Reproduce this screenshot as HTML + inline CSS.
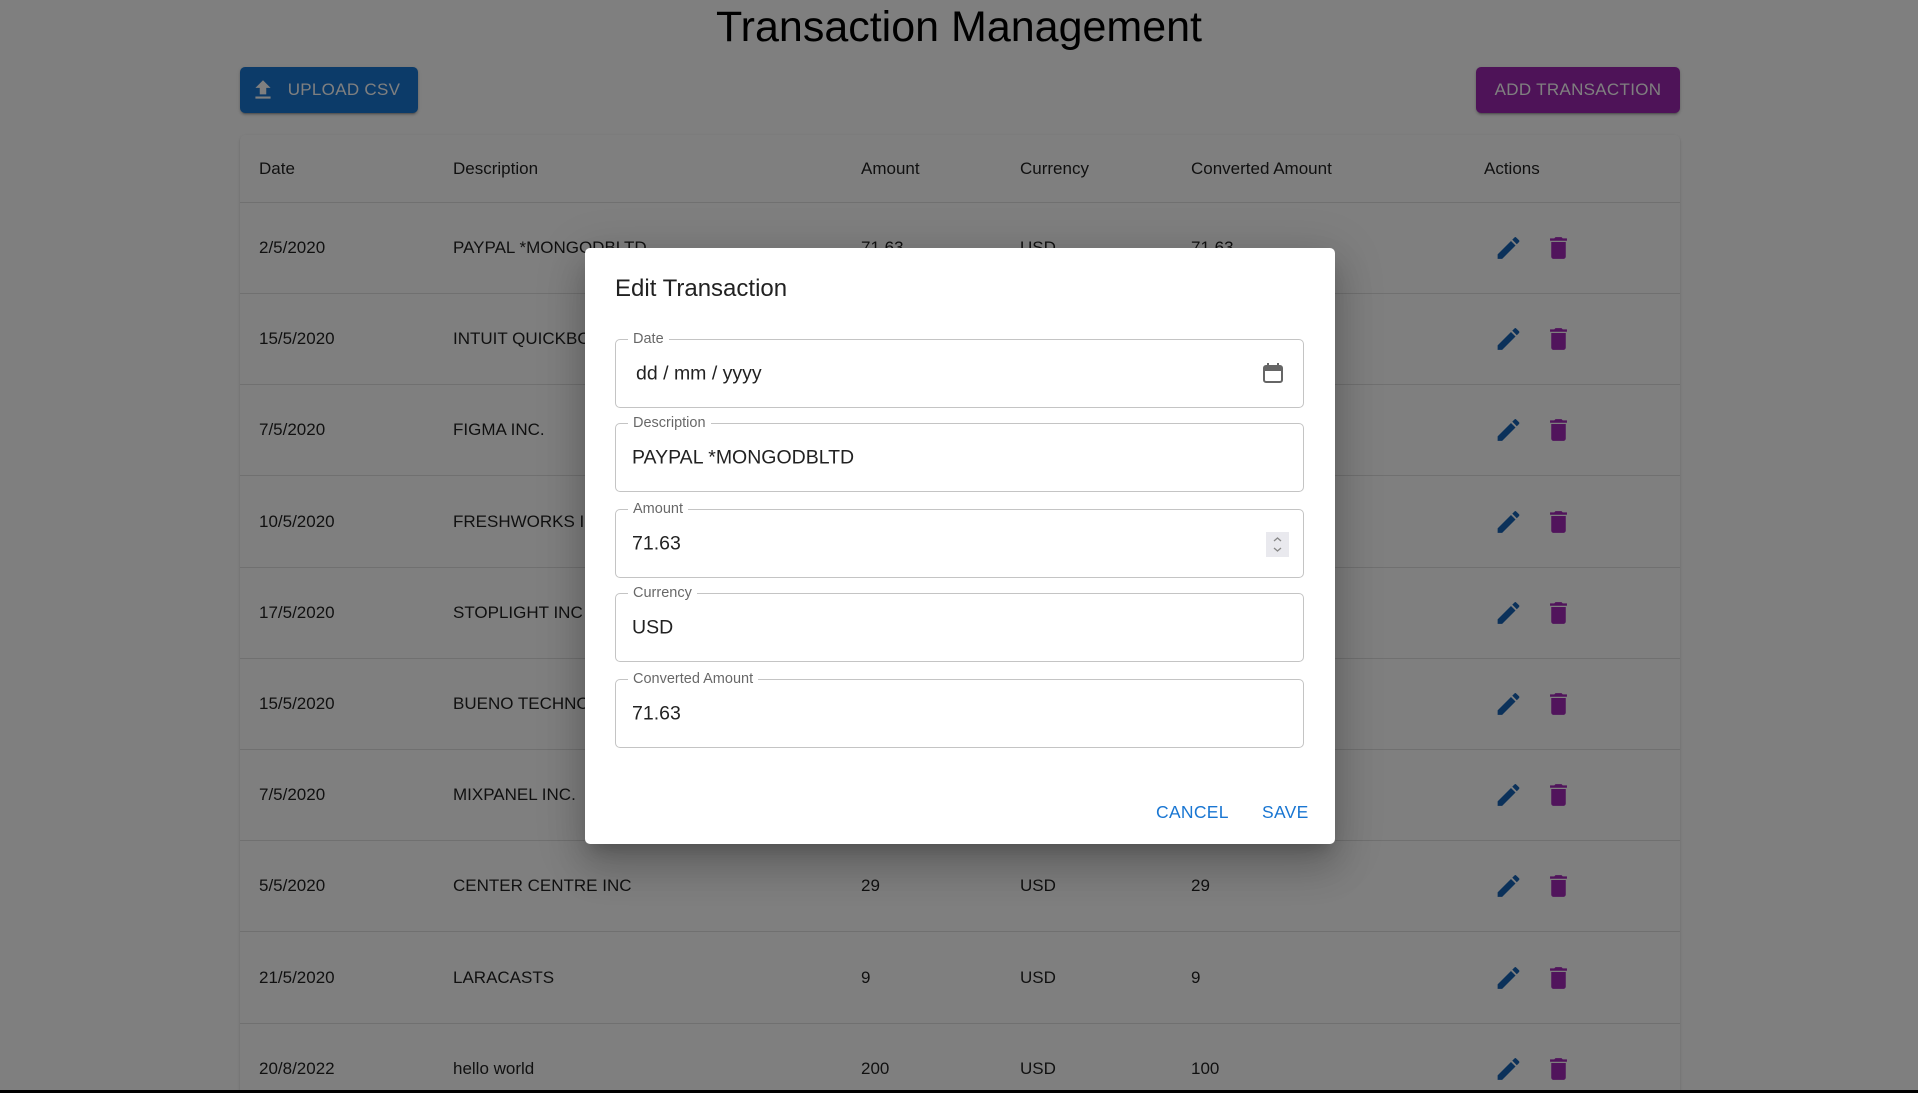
<!DOCTYPE html>
<html><head><meta charset="utf-8"><style>
*{margin:0;padding:0;box-sizing:border-box}
html,body{width:1918px;height:1093px;overflow:hidden}
body{background:#fff;font-family:"Liberation Sans",Arial,sans-serif;position:relative;color:rgba(0,0,0,.87)}
#wrap{position:absolute;left:0;top:0;width:1918px;height:1093px;overflow:hidden}
.abs{position:absolute}
h1{position:absolute;left:0;width:1918px;top:1px;text-align:center;font-weight:normal;font-size:43px;line-height:52px;color:#000}
.btn{position:absolute;height:46px;border-radius:5px;color:#fff;font-size:17px;display:flex;align-items:center;justify-content:center;letter-spacing:.3px;box-shadow:0 3px 1px -2px rgba(0,0,0,.2),0 2px 2px rgba(0,0,0,.14),0 1px 5px rgba(0,0,0,.12)}
.paper{position:absolute;left:240px;top:135px;width:1440px;height:970px;background:#fff;border-radius:5px;box-shadow:0 2px 1px -1px rgba(0,0,0,.2),0 1px 1px rgba(0,0,0,.14),0 1px 3px rgba(0,0,0,.12)}
.row{position:absolute;left:0;width:1440px;border-bottom:1px solid #e0e0e0;font-size:17px}
.row span{position:absolute;top:50%;transform:translateY(-50%);white-space:nowrap}
.row svg{position:absolute;top:50%;transform:translateY(-50%)}
.ov{position:absolute;left:0;top:0;width:1918px;height:1093px;background:rgba(0,0,0,.5)}
.dlg{position:absolute;left:585px;top:248px;width:750px;height:596px;background:#fff;border-radius:5px;box-shadow:0 11px 15px -7px rgba(0,0,0,.2),0 24px 38px 3px rgba(0,0,0,.14),0 9px 46px 8px rgba(0,0,0,.12)}
.f{position:absolute;left:30px;width:689px;height:69px;border:1px solid #c4c4c4;border-radius:5px}
.f label{position:absolute;left:12px;top:-10px;background:#fff;padding:0 5px;font-size:14.5px;color:rgba(0,0,0,.6);line-height:18px}
.f .v{position:absolute;left:16px;top:50%;transform:translateY(-50%);font-size:19.5px;color:rgba(0,0,0,.87)}
.tb{position:absolute;top:554px;font-size:17.5px;color:#1976d2;letter-spacing:.3px}
</style></head><body><div id="wrap">
<h1>Transaction Management</h1>
<div class="btn" style="left:240px;top:67px;width:178px;background:#1976d2">
<svg width="26" height="26" viewBox="0 0 24 24" style="margin-right:12px;margin-left:-8px"><path fill="#fff" d="M9 16h6v-6h4l-7-7-7 7h4zm-4 2h14v2H5z"/></svg>UPLOAD CSV</div>
<div class="btn" style="left:1476px;top:67px;width:204px;background:#9c27b0">ADD TRANSACTION</div>
<div class="paper">
<div class="row" style="top:0;height:68px"><span style="left:19px">Date</span><span style="left:213px">Description</span><span style="left:621px">Amount</span><span style="left:780px">Currency</span><span style="left:951px">Converted Amount</span><span style="left:1244px">Actions</span></div>
<div id="rows"></div>
</div>
<script>
var d=[["2/5/2020","PAYPAL *MONGODBLTD","71.63","USD","71.63"],["15/5/2020","INTUIT QUICKBOOKS","","",""],["7/5/2020","FIGMA INC.","","",""],["10/5/2020","FRESHWORKS INC","","",""],["17/5/2020","STOPLIGHT INC","","",""],["15/5/2020","BUENO TECHNOLOGIES","","",""],["7/5/2020","MIXPANEL INC.","","",""],["5/5/2020","CENTER CENTRE INC","29","USD","29"],["21/5/2020","LARACASTS","9","USD","9"],["20/8/2022","hello world","200","USD","100"]];
var h="";d.forEach(function(r,i){var t=68+i*91.2;h+='<div class="row" style="top:'+t+'px;height:91px"><span style="left:19px">'+r[0]+'</span><span style="left:213px">'+r[1]+'</span><span style="left:621px">'+r[2]+'</span><span style="left:780px">'+r[3]+'</span><span style="left:951px">'+r[4]+'</span><svg width="29" height="29" viewBox="0 0 24 24" style="left:1254px"><path fill="#1763b5" d="M3 17.25V21h3.75L17.81 9.94l-3.75-3.75L3 17.25zM20.71 7.04c.39-.39.39-1.02 0-1.41l-2.34-2.34a.996.996 0 0 0-1.41 0l-1.83 1.83 3.75 3.75 1.83-1.83z"/></svg><svg width="29" height="29" viewBox="0 0 24 24" style="left:1304px"><path fill="#a328b8" d="M6 19c0 1.1.9 2 2 2h8c1.1 0 2-.9 2-2V7H6v12zM19 4h-3.5l-1-1h-5l-1 1H5v2h14V4z"/></svg></div>'});
document.getElementById("rows").outerHTML=h;
</script>
<div class="ov"></div>
<div class="abs" style="left:0;top:1090px;width:1918px;height:3px;background:#000"></div>
<div class="dlg">
<div class="abs" style="left:30px;top:27px;font-size:24px;color:rgba(0,0,0,.87)">Edit Transaction</div>
<div class="f" style="top:91px"><label>Date</label><div class="v" style="left:20px">dd / mm / yyyy</div>
<svg class="abs" style="left:646px;top:22px" width="22" height="22" viewBox="0 0 22 22"><rect x="2" y="4" width="18" height="16" rx="2" fill="none" stroke="#666" stroke-width="2"/><rect x="2" y="4" width="18" height="5" fill="#666"/><rect x="5" y="1" width="2" height="5" fill="#666"/><rect x="15" y="1" width="2" height="5" fill="#666"/></svg></div>
<div class="f" style="top:175px"><label>Description</label><div class="v">PAYPAL *MONGODBLTD</div></div>
<div class="f" style="top:261px"><label>Amount</label><div class="v">71.63</div>
<div class="abs" style="left:650px;top:22px;width:23px;height:25px;background:#e9e9ee"><svg width="23" height="25" viewBox="0 0 23 25"><path d="M8 9l3.5-3 3.5 3M8 16l3.5 3 3.5-3" fill="none" stroke="#888" stroke-width="1.3"/></svg></div></div>
<div class="f" style="top:345px"><label>Currency</label><div class="v">USD</div></div>
<div class="f" style="top:431px"><label>Converted Amount</label><div class="v">71.63</div></div>
<div class="tb" style="left:571px">CANCEL</div>
<div class="tb" style="left:677px">SAVE</div>
</div>
</div></body></html>
